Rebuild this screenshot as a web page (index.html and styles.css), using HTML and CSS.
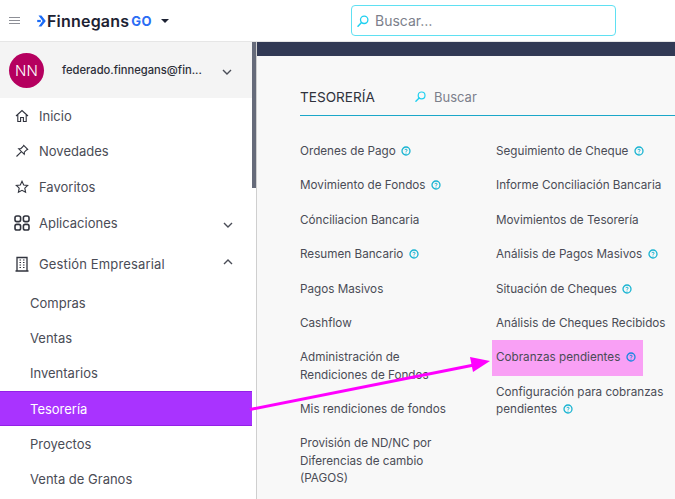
FILE: index.html
```html
<!DOCTYPE html>
<html lang="es">

<head>
    <meta charset="UTF-8">
    <meta name="viewport" content="width=device-width, initial-scale=1.0">
    <title>Finnegans GO - Tesorería</title>
    <link rel="stylesheet" href="styles.css">
</head>

<body>
    <svg class="defs" width="0" height="0">
        <symbol id="lens" viewBox="0 0 12 12">
            <circle cx="7.2" cy="4.8" r="3.7" fill="none" stroke="#1fd0f0" stroke-width="1.3" />
            <path d="M4.5 7.6 L1 11.2" fill="none" stroke="#1fd0f0" stroke-width="1.5" stroke-linecap="round" />
        </symbol>
        <symbol id="help" viewBox="0 0 10 10">
            <circle cx="5" cy="5" r="4" fill="none" stroke="currentColor" stroke-width="1.3" />
            <path d="M3.8 4.1 C3.9 2.9 6.2 2.9 6.2 4.1 C6.2 4.9 5 4.9 5 5.8" fill="none" stroke="currentColor" stroke-width="1" />
            <circle cx="5" cy="7" r="0.6" fill="currentColor" />
        </symbol>
        <symbol id="down" viewBox="0 0 10 6">
            <path d="M1 1 L5 5 L9 1" fill="none" stroke="#4a4d57" stroke-width="1.4" />
        </symbol>
        <symbol id="up" viewBox="0 0 10 6">
            <path d="M1 5 L5 1 L9 5" fill="none" stroke="#4a4d57" stroke-width="1.4" />
        </symbol>
    </svg>

    <header class="topbar">
        <div class="burger"><span></span><span></span><span></span></div>
        <div class="logo">
            <svg class="logo-mark" viewBox="0 0 9 12" width="9" height="12">
                <path d="M1.5 0.5 L4.4 0.5 L8.8 6 L4.4 11.5 L1.5 11.5 L5.6 6 Z" fill="#1c6bf5" />
                <rect x="0.2" y="4.9" width="3.6" height="2.2" fill="#1c6bf5" />
            </svg>
            <span class="logo-name">Finnegans</span>
            <span class="logo-go">GO</span>
            <span class="caret"></span>
        </div>
        <div class="top-search">
            <svg class="lens-big" width="12" height="12"><use href="#lens" /></svg>
            <span>Buscar…</span>
        </div>
    </header>

    <div class="main">
        <aside class="sidebar">
            <div class="profile">
                <div class="avatar">NN</div>
                <div class="email">federado.finnegans@fin...</div>
                <svg class="chev" width="10" height="6"><use href="#down" /></svg>
            </div>
            <nav class="menu">
                <a class="row">
                    <svg class="ico" viewBox="0 0 14 14" width="14" height="14">
                        <path d="M1 7 L7 1.5 L13 7 M2.8 6 V12.5 H5.6 V8.5 H8.4 V12.5 H11.2 V6" fill="none" stroke="#30333d" stroke-width="1.1" />
                    </svg>
                    Inicio
                </a>
                <a class="row">
                    <svg class="ico" viewBox="0 0 14 14" width="14" height="14">
                        <path d="M8.7 1.3 L12.7 5.3 L11.6 5.9 L9.3 8.2 L9.2 10.3 L3.7 4.8 L5.8 4.7 L8.1 2.4 Z M6.2 7.8 L1.5 12.5" fill="none" stroke="#30333d" stroke-width="1.1" />
                    </svg>
                    Novedades
                </a>
                <a class="row">
                    <svg class="ico" viewBox="0 0 14 14" width="14" height="14">
                        <path d="M7 1.3 L8.7 5 L12.7 5.5 L9.8 8.2 L10.6 12.3 L7 10.3 L3.4 12.3 L4.2 8.2 L1.3 5.5 L5.3 5 Z" fill="none" stroke="#30333d" stroke-width="1.1" />
                    </svg>
                    Favoritos
                </a>
                <a class="row row-apps">
                    <svg class="ico ico-big" viewBox="0 0 16 16" width="16" height="16">
                        <g fill="none" stroke="#30333d" stroke-width="1.6">
                            <rect x="1" y="1" width="5.6" height="5.6" rx="1.8" />
                            <rect x="9.4" y="1" width="5.6" height="5.6" rx="1.8" />
                            <rect x="1" y="9.4" width="5.6" height="5.6" rx="1.8" />
                            <rect x="9.4" y="9.4" width="5.6" height="5.6" rx="1.8" />
                        </g>
                    </svg>
                    Aplicaciones
                    <svg class="chev" width="10" height="6"><use href="#down" /></svg>
                </a>
                <a class="row row-tall">
                    <svg class="ico ico-big" viewBox="0 0 16 16" width="16" height="16">
                        <path d="M3 15 V1.5 H13 V15 M1.5 15 H14.5" fill="none" stroke="#30333d" stroke-width="1.3" />
                        <path d="M5.5 4 H7 M9 4 H10.5 M5.5 6.5 H7 M9 6.5 H10.5 M5.5 9 H7 M9 9 H10.5 M5.5 11.5 H7 M9 11.5 H10.5" stroke="#30333d" stroke-width="1.2" />
                    </svg>
                    Gestión Empresarial
                    <svg class="chev chev-up" width="10" height="6"><use href="#up" /></svg>
                </a>
                <a class="sub sub-up">Compras</a>
                <a class="sub sub-up">Ventas</a>
                <a class="sub sub-up">Inventarios</a>
                <a class="sub active">Tesorería</a>
                <a class="sub">Proyectos</a>
                <a class="sub">Venta de Granos</a>
            </nav>
        </aside>

        <div class="scrolltrack"><div class="thumb"></div></div>

        <section class="content">
            <div class="darkbar"></div>
            <div class="titlebar">
                <h1>TESORERÍA</h1>
                <svg class="lens-small" width="11" height="11"><use href="#lens" /></svg>
                <span class="title-search">Buscar</span>
            </div>
            <div class="columns">
                <ul class="col">
                    <li>Ordenes de Pago <svg class="help" width="10" height="10"><use href="#help" /></svg></li>
                    <li>Movimiento de Fondos <svg class="help" width="10" height="10"><use href="#help" /></svg></li>
                    <li>Cónciliacion Bancaria</li>
                    <li>Resumen Bancario <svg class="help" width="10" height="10"><use href="#help" /></svg></li>
                    <li>Pagos Masivos</li>
                    <li>Cashflow</li>
                    <li>Administración de<br>Rendiciones de Fondos</li>
                    <li>Mis rendiciones de fondos</li>
                    <li>Provisión de ND/NC por<br>Diferencias de cambio<br>(PAGOS)</li>
                </ul>
                <ul class="col">
                    <li>Seguimiento de Cheque <svg class="help" width="10" height="10"><use href="#help" /></svg></li>
                    <li>Informe Conciliación Bancaria</li>
                    <li>Movimientos de Tesorería</li>
                    <li>Análisis de Pagos Masivos <svg class="help" width="10" height="10"><use href="#help" /></svg></li>
                    <li>Situación de Cheques <svg class="help" width="10" height="10"><use href="#help" /></svg></li>
                    <li>Análisis de Cheques Recibidos</li>
                    <li class="marked">Cobranzas pendientes <svg class="help" width="10" height="10"><use href="#help" /></svg></li>
                    <li>Configuración para cobranzas<br>pendientes <svg class="help" width="10" height="10"><use href="#help" /></svg></li>
                </ul>
            </div>
        </section>
    </div>

    <!-- flecha dibujada encima de la captura -->
    <svg class="arrow" width="675" height="499" viewBox="0 0 675 499">
        <path d="M250 409.5 L474 365" fill="none" stroke="#ff00ff" stroke-width="3" />
        <path d="M490 361 L470 357 L473 372 Z" fill="#ff00ff" />
    </svg>
</body>

</html>
```

FILE: styles.css
```css
* {
    box-sizing: border-box;
}

html,
body {
    margin: 0;
    height: 499px;
    overflow: hidden;
}

body {
    position: relative;
    background-color: #fff;
    color: #4a4c56;
    font-family: Inter, "Noto Sans", sans-serif;
}

.defs {
    display: block;
    height: 0;
}

.topbar {
    display: flex;
    align-items: center;
    height: 42px;
    padding-left: 9px;
    border-bottom: 1px solid #e6e6e6;
}

.burger {
    display: flex;
    flex-direction: column;
    gap: 2px;
    width: 11px;
}

.burger span {
    height: 1px;
    background-color: #8d8f96;
}

.logo {
    display: flex;
    align-items: center;
    width: 331px;
    padding-left: 17px;
}

.logo-mark {
    margin-right: 1px;
}

.logo-name {
    color: #1d2233;
    font-size: 16px;
    font-weight: 600;
    letter-spacing: 0.2px;
}

.logo-go {
    margin-left: 2px;
    color: #2a6df4;
    font-size: 13px;
    font-weight: 700;
    letter-spacing: 0.5px;
}

.caret {
    width: 0;
    height: 0;
    margin-left: 9px;
    border-top: 4px solid #1d2233;
    border-left: 4px solid transparent;
    border-right: 4px solid transparent;
}

.top-search {
    display: flex;
    align-items: center;
    width: 265px;
    height: 31px;
    padding-left: 5px;
    border: 1px solid #5fe0f2;
    border-radius: 4px;
    color: #7c7f8b;
    font-size: 14px;
}

.lens-big {
    margin-right: 6px;
}

.main {
    display: flex;
    height: 457px;
}

.sidebar {
    width: 252px;
    flex-shrink: 0;
}

.profile {
    display: flex;
    align-items: center;
    height: 56px;
    padding-left: 9px;
    background-color: #f4f4f4;
}

.avatar {
    display: flex;
    align-items: center;
    justify-content: center;
    width: 35px;
    height: 35px;
    border-radius: 50%;
    background-color: #b5005f;
    color: #fff;
    font-size: 15px;
    font-weight: 300;
}

.email {
    width: 160px;
    margin-left: 18px;
    color: #2c2e38;
    font-size: 11.2px;
    font-weight: 500;
}

.chev {
    flex-shrink: 0;
}

.profile .chev {
    margin-top: 3px;
}

.row {
    display: flex;
    align-items: center;
    height: 35.5px;
    padding-left: 15px;
    font-size: 13px;
}

.ico {
    width: 14px;
    margin-right: 10px;
}

.ico-big {
    width: 16px;
    margin-left: -1px;
    margin-right: 9px;
}

.row .chev {
    margin-left: auto;
    margin-right: 19px;
    margin-top: 5px;
}

.row .chev-up {
    margin-top: -4px;
}

.row-apps {
    height: 36px;
}

.row-tall {
    height: 45.5px;
    padding-top: 1px;
    letter-spacing: 0.15px;
}

.sub {
    display: flex;
    align-items: center;
    height: 35px;
    padding-left: 30px;
    font-size: 13px;
}

.sub-up {
    padding-bottom: 2px;
}

.active {
    background-color: #a933ff;
    border-top: 1px solid #9320e6;
    border-bottom: 1px solid #9320e6;
    color: #fff;
}

.scrolltrack {
    width: 5px;
    flex-shrink: 0;
    border-right: 1px solid #cfcfcf;
}

.thumb {
    width: 4px;
    height: 146px;
    background-color: #666b7a;
}

.content {
    flex: 1;
    background-color: #f8f8f8;
}

.darkbar {
    height: 14px;
    background-color: #323a55;
}

.titlebar {
    display: flex;
    align-items: center;
    height: 60px;
    margin-left: 43px;
    padding-top: 22px;
    border-bottom: 1px solid #1ba7c9;
}

.titlebar h1 {
    width: 115px;
    margin: 0;
    color: #30323c;
    font-size: 13.6px;
    font-weight: 400;
}

.lens-small {
    margin-right: 8px;
}

.title-search {
    color: #7c7f8b;
    font-size: 13px;
}

.columns {
    display: grid;
    grid-template-columns: 196px 1fr;
    margin-left: 43px;
    padding-top: 27px;
}

.col {
    display: flex;
    flex-direction: column;
    gap: 17.2px;
    margin: 0;
    padding: 0;
    list-style: none;
    font-size: 11.7px;
    line-height: 17.2px;
}

.help {
    color: #19b4d2;
    vertical-align: -1px;
    margin-left: 2px;
}

.marked {
    width: 151px;
    margin: -9px 0 -9px -4px;
    padding: 9px 4px;
    background-color: #f9a0f5;
}

.marked .help {
    color: #1a86e0;
}

.arrow {
    position: absolute;
    top: 0;
    left: 0;
    pointer-events: none;
}
```
